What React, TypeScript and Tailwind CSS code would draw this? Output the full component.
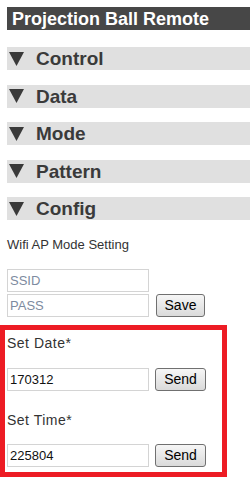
import React from "react";

const sections = ["Control", "Data", "Mode", "Pattern", "Config"];

function SectionBar({ label }: { label: string }) {
  return (
    <div className="flex h-[23px] items-center bg-[#e0e0e0] pl-[2px] font-['Liberation_Sans',Arial,sans-serif] text-[19px] font-bold leading-none text-[#3a3a3a]">
      <svg width="15" height="14" viewBox="0 0 15 14" className="mr-[12px]">
        <polygon points="0,0 15,0 7.5,14" fill="#3a3a3a" />
      </svg>
      <span>{label}</span>
    </div>
  );
}

function Button({ label }: { label: string }) {
  return (
    <button className="h-[23px] w-full rounded-[3px] border border-[#707070] bg-gradient-to-b from-[#f6f6f6] to-[#dadada] font-['Liberation_Sans',Arial,sans-serif] text-[14px] leading-none text-black">
      {label}
    </button>
  );
}

function Field({ placeholder, value }: { placeholder?: string; value?: string }) {
  return (
    <input
      readOnly
      placeholder={placeholder}
      defaultValue={value}
      className="h-[23px] w-[142px] border border-[#d4d4d4] px-[2px] font-['Liberation_Sans',Arial,sans-serif] text-[13px] text-[#111] placeholder:text-[#7d8ba0] outline-none"
    />
  );
}

export default function App() {
  return (
    <div className="relative min-h-[481px] w-[250px] overflow-hidden bg-white pl-[7px] pt-[7px] font-['Liberation_Sans',Arial,sans-serif]">
      <h1 className="flex h-[23px] items-center bg-[#474747] pl-[5px] text-[18px] font-bold leading-none text-white">
        Projection Ball Remote
      </h1>
      <div className="mt-[17px] flex flex-col gap-[14.5px]">
        {sections.map((s) => (
          <SectionBar key={s} label={s} />
        ))}
      </div>
      <p className="mt-[15px] text-[13px] leading-[20px] text-[#333]">Wifi AP Mode Setting</p>
      <div className="mt-[14px] flex flex-col gap-[1px]">
        <Field placeholder="SSID" />
        <div className="flex items-center gap-[7px]">
          <Field placeholder="PASS" />
          <div className="w-[49px]">
            <Button label="Save" />
          </div>
        </div>
      </div>
      <div className="mt-[16px] flex flex-col">
        <p className="text-[14px] leading-[20px] tracking-[0.5px] text-[#333]">Set Date*</p>
        <div className="mt-[14px] flex items-center gap-[6px]">
          <Field value="170312" />
          <div className="w-[51px]">
            <Button label="Send" />
          </div>
        </div>
        <p className="mt-[19px] text-[14px] leading-[20px] tracking-[0.5px] text-[#333]">Set Time*</p>
        <div className="mt-[13px] flex items-center gap-[6px]">
          <Field value="225804" />
          <div className="w-[51px]">
            <Button label="Send" />
          </div>
        </div>
      </div>
      <div className="pointer-events-none absolute left-0 top-[325px] h-[152px] w-[227px] border-[5px] border-[#ed1c24]" />
    </div>
  );
}
